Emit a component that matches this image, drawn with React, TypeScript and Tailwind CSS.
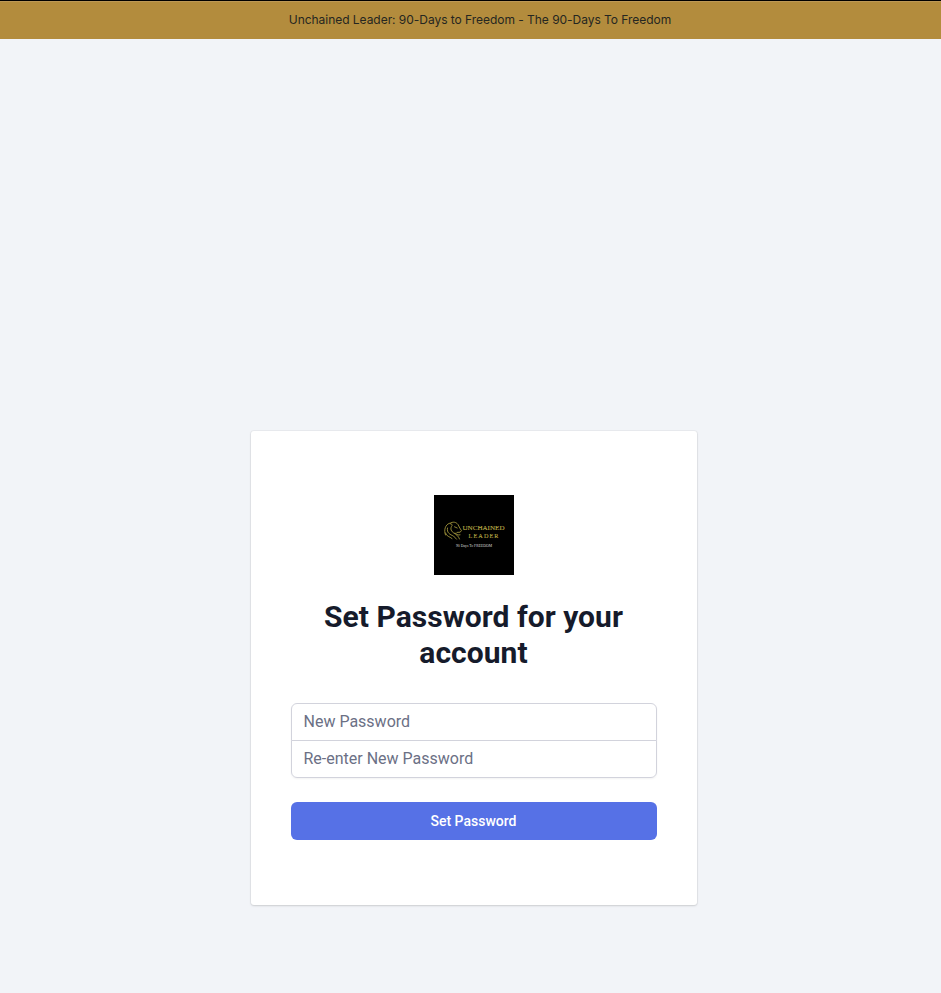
function LionMark() {
  return (
    <svg viewBox="0 0 80 80" className="block h-20 w-20" role="img" aria-label="Unchained Leader">
      <rect width="80" height="80" fill="#000" />
      <g fill="none" stroke="#b3a443" strokeWidth="0.8" strokeLinecap="round" strokeLinejoin="round">
        <path d="M11.5 40C9.5 35 11.5 29.5 15.5 28.3L18 29.5" />
        <path d="M16 28.3C19 26.3 22 27 24 29.5L25.8 33L27.4 35.5L26.2 37.2L23 37.4" />
        <path d="M20.5 31.8L23.2 33" />
        <path d="M18 30.5C15.5 34 17.5 36.5 20 38.2C22.5 39.8 24.5 41 25.5 44" />
        <path d="M13.5 33C12.5 38 16 39.5 19.5 41L22.5 44.2" />
        <path d="M11.5 38C12.5 41.5 15.5 41.5 18 43.5" />
        <path d="M21 38L24 40L26 39.8" />
      </g>
      <g fill="#bcac47" fontFamily="Liberation Serif, serif">
        <text x="28.5" y="34.7" fontSize="6" textLength="42" lengthAdjust="spacingAndGlyphs" stroke="#bcac47" strokeWidth="0.1">UNCHAINED</text>
        <text x="34.5" y="42.7" fontSize="6.2" textLength="30" lengthAdjust="spacing" stroke="#bcac47" strokeWidth="0.1">LEADER</text>
      </g>
      <text x="22" y="52.4" fontSize="4.2" fill="#dddddd" fontFamily="Liberation Serif, serif" textLength="36" lengthAdjust="spacingAndGlyphs">
        90 Days To FREEDOM
      </text>
    </svg>
  );
}

const fieldClass =
  "block h-[38px] w-full border border-[#d2d3dc] bg-white pr-3 pb-0.5 pl-[11.5px] text-base leading-6 text-gray-900 placeholder:text-[#6b7085] outline-none";

export default function App() {
  return (
    <div className="flex min-h-[993px] flex-col bg-[#f2f4f8] font-['Roboto',sans-serif]">
      <header className="flex h-[39px] items-center justify-center border-t border-black bg-[#b38c3d] pl-[19px] font-['Inter',sans-serif] text-xs text-[#252621] shadow-[inset_0_1px_0_#bd9956]">
        <span className="whitespace-nowrap tracking-[-0.035px]">Unchained Leader: 90-Days to Freedom - The 90-Days To Freedom</span>
      </header>
      <main className="flex pt-[392px] pl-[251px]">
        <section className="h-[474px] w-[446px] rounded-[3px] bg-white px-10 pt-16 shadow-[0_0_0_1px_rgba(0,0,0,0.035),0_1px_3px_0_rgba(0,0,0,0.08),0_1px_2px_0_rgba(0,0,0,0.06)]">
          <div className="flex justify-center">
            <LionMark />
          </div>
          <h1 className="mt-6 -ml-px text-center text-3xl leading-9 font-bold tracking-[0.04px] text-[#161b2b]">Set Password for your account</h1>
          <form className="mt-8" onSubmit={(event) => event.preventDefault()}>
            <div className="rounded-md shadow-[0_1px_2px_0_rgba(0,0,0,0.05)]">
              <input type="password" aria-label="New Password" placeholder="New Password" className={`${fieldClass} rounded-t-md`} />
              <input type="password" aria-label="Re-enter New Password" placeholder="Re-enter New Password" className={`${fieldClass} -mt-px rounded-b-md`} />
            </div>
            <button type="submit" className="mt-6 flex h-[38px] w-full items-center justify-center rounded-md bg-[#5671e6] pr-px text-sm leading-5 font-medium text-white">
              Set Password
            </button>
          </form>
        </section>
      </main>
    </div>
  );
}
